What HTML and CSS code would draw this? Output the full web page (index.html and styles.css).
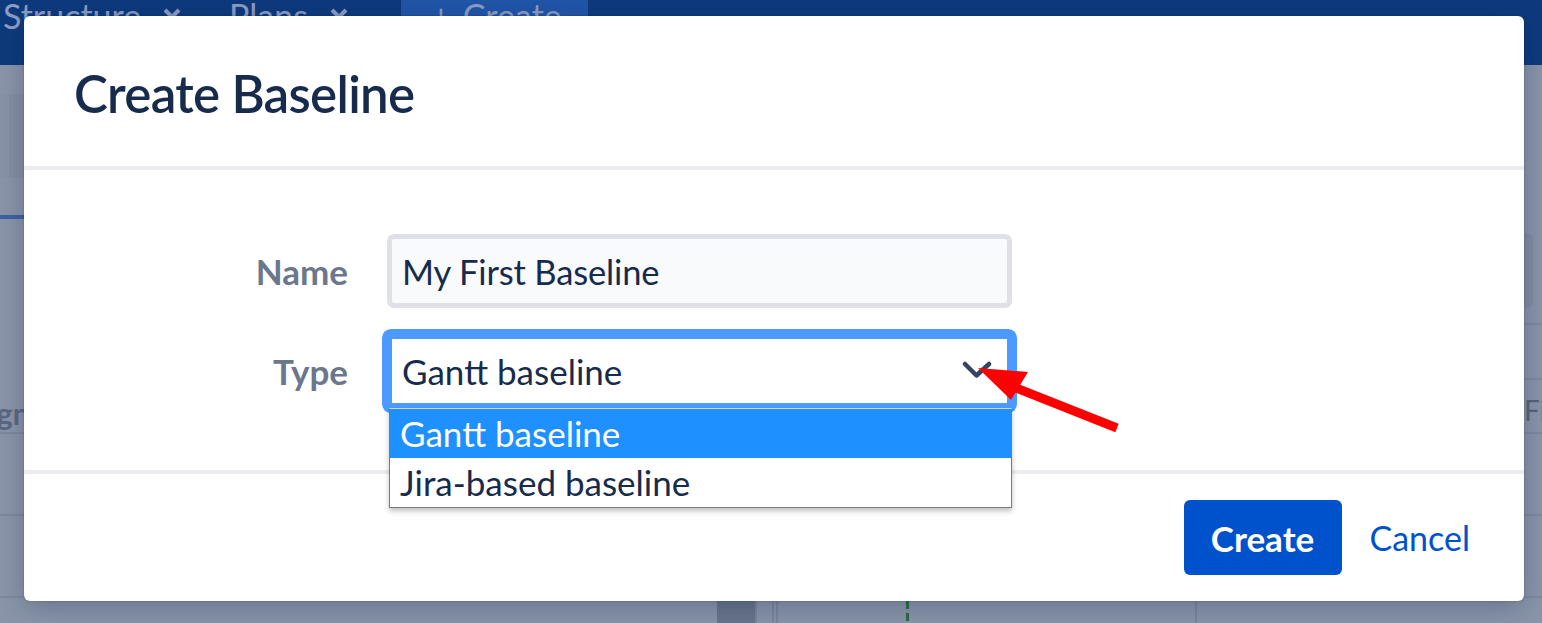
FILE: index.html
```html
<!DOCTYPE html>
<html lang="en">
<head>
<meta charset="utf-8">
<title>Create Baseline</title>
<link rel="stylesheet" href="styles.css">
</head>
<body>
<div class="app">
  <header class="topbar">
    <div class="tab tab-structure">
      <span class="tab-label">Structure</span>
      <svg class="tab-x" viewBox="0 0 20 20" aria-hidden="true"><path d="M3 3 L17 17 M17 3 L3 17"/></svg>
    </div>
    <div class="tab tab-plans">
      <span class="tab-label">Plans</span>
      <svg class="tab-x" viewBox="0 0 20 20" aria-hidden="true"><path d="M3 3 L17 17 M17 3 L3 17"/></svg>
    </div>
    <div class="tab tab-create">
      <span class="tab-plus">+</span>
      <span class="tab-label">Create</span>
    </div>
  </header>

  <main class="workspace">
    <div class="toolbar">
      <span class="tb-block tb-a"></span>
      <span class="tb-block tb-b"></span>
    </div>
    <div class="viewtabs"><span class="viewtab"></span></div>
    <div class="filters">
      <span class="filters-spacer"></span>
      <div class="filters-right"><span class="filter-btn"></span></div>
    </div>
    <div class="row row-a">
      <span class="filters-spacer"></span>
      <div class="row-a-right"></div>
    </div>
    <div class="thead">
      <span class="th-left">Assignee</span>
      <span class="th-right">Fix Version</span>
    </div>
    <div class="row row-b"></div>
    <div class="row row-c"></div>
    <div class="chart">
      <span class="chart-gap g1"></span>
      <span class="chart-col dark"></span>
      <span class="chart-line"></span>
      <span class="chart-gap g2"></span>
      <span class="chart-line"></span>
      <span class="chart-gap g3"></span>
      <span class="chart-line"></span>
      <span class="chart-gap g4"></span>
      <span class="chart-today"></span>
      <span class="chart-gap g5"></span>
      <span class="chart-line"></span>
    </div>
  </main>
</div>

<section class="dialog" role="dialog" aria-labelledby="dlg-title">
  <header class="dialog-header">
    <h1 id="dlg-title" class="dialog-title">Create Baseline</h1>
  </header>
  <div class="dialog-body">
    <form class="form">
      <label class="form-label" for="bl-name">Name</label>
      <div class="text-field">
        <span id="bl-name" class="field-value name-value">My First Baseline</span>
      </div>

      <label class="form-label">Type</label>
      <div class="select-field">
        <div class="select-box">
          <span class="field-value">Gantt baseline</span>
          <svg class="chevron" viewBox="0 0 34 20" aria-hidden="true"><path d="M4 3 L15.5 14.5 L28 3"/></svg>
        </div>
        <ul class="select-menu">
          <li class="option selected">Gantt baseline</li>
          <li class="option">Jira-based baseline</li>
        </ul>
      </div>
    </form>
  </div>
  <footer class="dialog-footer">
    <button class="btn-primary" type="button">Create</button>
    <button class="btn-link" type="button">Cancel</button>
  </footer>
</section>

<svg class="callout-arrow" viewBox="0 0 170 90" aria-hidden="true">
  <path class="arrow-shaft" d="M56 38 L157 78"/>
  <polygon class="arrow-head" points="18,18 68,22 51,50"/>
</svg>
</body>
</html>
```

FILE: styles.css
```css
* {
  box-sizing: border-box;
  margin: 0;
  padding: 0;
}

html, body {
  width: 1542px;
  height: 623px;
  overflow: hidden;
}

body {
  position: relative;
  font-family: Lato, "Open Sans", "Liberation Sans", sans-serif;
  background: #8a95a9;
  color: #172b4d;
}

/* ---------- background app (dimmed) ---------- */
.app {
  height: 623px;
  display: flex;
  flex-direction: column;
}

.topbar {
  height: 65px;
  flex: none;
  display: flex;
  background: #0e3a7c;
  color: #8d9dc4;
  font-size: 34px;
  line-height: 30px;
}

.tab {
  display: flex;
  align-items: flex-start;
  padding-top: 1px;
}

.tab-structure { width: 226px; padding-left: 3px; }
.tab-plans { width: 175px; padding-left: 3px; }
.tab-create {
  width: 187px;
  padding-left: 30px;
  background: #2156a8;
}

.tab-x {
  width: 20px;
  height: 20px;
  margin-left: 21px;
  margin-top: 6px;
  fill: none;
  stroke: #8d9dc4;
  stroke-width: 4;
}

.tab-plus { margin-right: 12px; }

.workspace {
  flex: 1;
  display: flex;
  flex-direction: column;
}

.toolbar {
  margin-top: 29px;
  height: 84px;
  display: flex;
}

.tb-block { height: 100%; }
.tb-a { width: 8px; background: #8993a7; margin-right: 1px; }
.tb-b { width: 60px; background: #858fa4; }

.viewtabs {
  height: 41px;
  display: flex;
  align-items: flex-end;
}

.viewtab {
  width: 140px;
  height: 4px;
  background: #3d62a6;
}

.filters {
  height: 106px;
  display: flex;
}

.filters-spacer { flex: 1; }

.filters-right {
  width: 420px;
  border-bottom: 2px solid #7f899e;
  display: flex;
  justify-content: flex-end;
  align-items: flex-start;
}

.filter-btn {
  width: 70px;
  height: 75px;
  margin-top: 14px;
  margin-right: 9px;
  border-radius: 7px;
  background: #838da2;
}

.row-a {
  height: 55px;
  display: flex;
}

.row-a-right {
  width: 420px;
  border-bottom: 2px solid #7f899e;
}

.thead {
  height: 54px;
  display: flex;
  align-items: center;
  justify-content: space-between;
  border-bottom: 2px solid #7f899e;
  font-size: 30px;
  overflow: hidden;
  white-space: nowrap;
}

.th-left {
  margin-left: -58px;
  font-weight: 700;
  color: #5c6881;
  padding-top: 14px;
}

.th-right {
  width: 18px;
  overflow: hidden;
  color: #56637c;
  font-size: 28px;
  padding-top: 8px;
}

.row-b, .row-c {
  height: 82px;
  border-bottom: 2px solid #7f899e;
}

.chart {
  flex: 1;
  display: flex;
}

.chart-gap.g1 { width: 717px; }
.chart-col.dark { width: 38px; background: #69758b; }
.chart-line { width: 2px; background: #7c869b; }
.chart-gap.g2 { width: 15px; }
.chart-gap.g3 { width: 2px; }
.chart-gap.g4 { width: 128px; }
.chart-today {
  width: 3px;
  background: repeating-linear-gradient(to bottom, #2f6b45 0 8px, transparent 8px 12px);
  background-position: 0 3px;
}
.chart-gap.g5 { width: 286px; }

/* ---------- dialog ---------- */
.dialog {
  position: absolute;
  left: 24px;
  top: 16px;
  width: 1500px;
  height: 585px;
  background: #fff;
  border-radius: 6px;
  box-shadow: 0 6px 28px rgba(9, 30, 66, 0.28), 0 0 2px rgba(9, 30, 66, 0.3);
  display: flex;
  flex-direction: column;
}

.dialog-header {
  height: 150px;
  flex: none;
  display: flex;
  align-items: center;
  padding-left: 50px;
  padding-top: 5px;
  border-bottom: 4px solid #ebecf0;
  box-sizing: border-box;
  height: 154px;
}

.dialog-title {
  font-size: 51px;
  font-weight: 600;
  letter-spacing: -0.7px;
  color: #172b4d;
  line-height: 1.2;
}

.dialog-body {
  flex: none;
  padding-top: 64px;
  border-bottom: 4px solid #ebecf0;
  box-sizing: content-box;
  height: 236px;
}

.form {
  display: grid;
  grid-template-columns: 324px 625px;
  column-gap: 39px;
  row-gap: 26px;
  align-items: center;
}

.form-label {
  text-align: right;
  font-size: 35px;
  font-weight: 700;
  color: #6b778c;
}

.text-field {
  height: 74px;
  border: 5px solid #dfe1e6;
  border-radius: 7px;
  background: #f9fafc;
  display: flex;
  align-items: center;
  padding-left: 10px;
}

.field-value {
  font-size: 35px;
  color: #172b4d;
}

.name-value {
  font-size: 34.5px;
  letter-spacing: -0.15px;
}

.select-field {
  position: relative;
}

.select-box {
  height: 74px;
  border: 5px solid #4c9aff;
  border-radius: 4px;
  box-shadow: 0 0 0 5px #4c9aff;
  background: #fff;
  display: flex;
  align-items: center;
  padding-left: 10px;
  padding-right: 12px;
}

.chevron {
  margin-left: auto;
  width: 34px;
  height: 20px;
  fill: none;
  stroke: #344563;
  stroke-width: 4.5;
  stroke-linecap: round;
  stroke-linejoin: round;
}

.select-menu {
  position: absolute;
  left: 2px;
  top: 74px;
  width: 623px;
  list-style: none;
  background: #fff;
  border: 1px solid #7a7a7a;
  border-top: 1px solid #d0d4dc;
  box-shadow: 0 3px 5px rgba(0, 0, 0, 0.25);
  z-index: 2;
}

.option {
  height: 49px;
  line-height: 48px;
  padding-left: 10px;
  font-size: 35px;
  color: #172b4d;
}

.option.selected {
  background: #1e90ff;
  color: #fff;
}

.dialog-footer {
  flex: 1;
  display: flex;
  justify-content: flex-end;
  align-items: center;
  gap: 28px;
  padding-right: 54px;
}

.btn-primary {
  width: 158px;
  height: 75px;
  border: none;
  border-radius: 6px;
  background: #0052cc;
  color: #fff;
  font-family: inherit;
  font-size: 35px;
  font-weight: 700;
}

.btn-link {
  border: none;
  background: none;
  color: #0052cc;
  font-family: inherit;
  font-size: 34px;
}

/* ---------- red callout arrow ---------- */
.callout-arrow {
  position: absolute;
  left: 960px;
  top: 350px;
  width: 170px;
  height: 90px;
  z-index: 5;
}

.arrow-shaft {
  stroke: #ff0000;
  stroke-width: 9;
  fill: none;
}

.arrow-head {
  fill: #ff0000;
}
```
